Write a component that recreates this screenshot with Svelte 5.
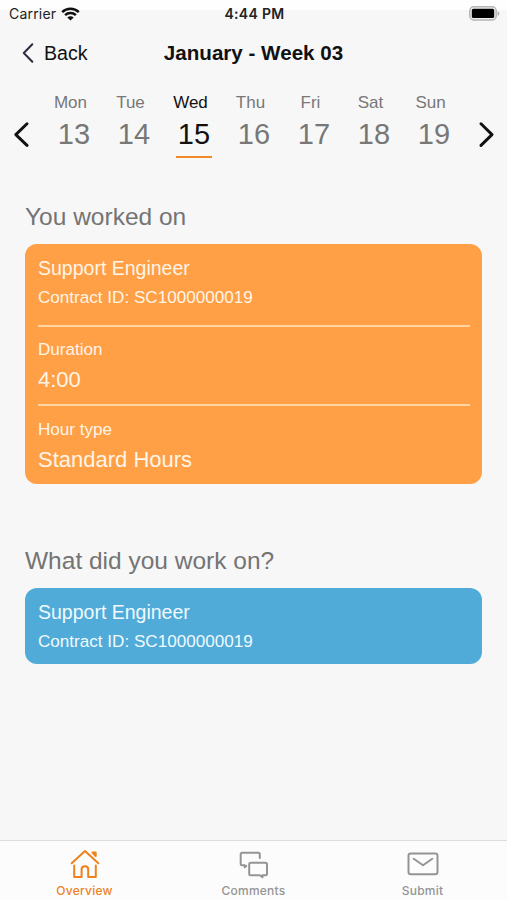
<script lang="ts">
    const days = [
        { name: "Mon", date: 13 },
        { name: "Tue", date: 14 },
        { name: "Wed", date: 15 },
        { name: "Thu", date: 16 },
        { name: "Fri", date: 17 },
        { name: "Sat", date: 18 },
        { name: "Sun", date: 19 }
    ];

    const tabs = ["Overview", "Comments", "Submit"];

    let selected = $state(15);
    let activeTab = $state("Overview");
</script>

<div class="screen">
    <div class="status-bar">
        <div class="carrier">
            <span>Carrier</span>
            <svg width="19" height="14" viewBox="0 0 19 14">
                <g fill="none" stroke="#111" stroke-width="2.5">
                    <path d="M1.2 5.1C5.8 0.7 13.2 0.7 17.8 5.1" />
                    <path d="M4.1 8.1C7 5.3 12 5.3 14.9 8.1" />
                </g>
                <path d="M6.3 10.4C8.1 8.8 10.9 8.8 12.7 10.4L9.5 13.6Z" fill="#111" />
            </svg>
        </div>
        <span class="time">4:44 PM</span>
        <svg class="battery" width="31" height="15" viewBox="0 0 31 15">
            <rect x="0.8" y="0.8" width="26.4" height="13.2" rx="4" fill="#f1f1f1" stroke="#b5b5b5" stroke-width="1.5" />
            <rect x="2.8" y="2.8" width="22.4" height="9.2" rx="1.6" fill="#000" />
            <path d="M28.7 5.2C30.9 6 30.9 9 28.7 9.8Z" fill="#aaa" />
        </svg>
    </div>

    <header>
        <button class="back">
            <svg width="12" height="20" viewBox="0 0 12 20">
                <path d="M10.3 1.2L1.8 10L10.3 18.8" fill="none" stroke="#2c2e40" stroke-width="2" stroke-linecap="round" stroke-linejoin="round" />
            </svg>
            <span>Back</span>
        </button>
        <h1>January - Week 03</h1>
    </header>

    <div class="week">
        <button class="arrow" aria-label="Previous week">
            <svg width="16" height="26" viewBox="0 0 16 26">
                <path d="M14 1.8L2.8 12.6L14 23.4" fill="none" stroke="#111" stroke-width="2.9" stroke-linecap="round" stroke-linejoin="round" />
            </svg>
        </button>
        {#each days as day}
            <button class="day" class:selected={day.date === selected} onclick={() => selected = day.date}>
                <span class="name">{day.name}</span>
                <span class="date">{day.date}</span>
            </button>
        {/each}
        <button class="arrow next" aria-label="Next week">
            <svg width="16" height="26" viewBox="0 0 16 26">
                <path d="M2 1.8L13 12.6L2 23.4" fill="none" stroke="#111" stroke-width="2.9" stroke-linecap="round" stroke-linejoin="round" />
            </svg>
        </button>
    </div>

    <main>
        <h2>You worked on</h2>
        <div class="card worked">
            <div class="contract">
                <p class="title">Support Engineer</p>
                <p class="label">Contract ID: SC1000000019</p>
            </div>
            <div class="detail">
                <p class="label">Duration</p>
                <p class="value">4:00</p>
            </div>
            <div class="detail">
                <p class="label">Hour type</p>
                <p class="value">Standard Hours</p>
            </div>
        </div>

        <h2 class="question">What did you work on?</h2>
        <div class="card available">
            <div class="contract">
                <p class="title">Support Engineer</p>
                <p class="label">Contract ID: SC1000000019</p>
            </div>
        </div>
    </main>

    <nav>
        {#each tabs as tab}
            <button class="tab" class:active={tab === activeTab} onclick={() => activeTab = tab}>
                <svg width="32" height="32" viewBox="0 0 32 32" fill="none" stroke="currentColor" stroke-width="2" stroke-linecap="round" stroke-linejoin="round">
                    {#if tab === "Overview"}
                        <path d="M2.7 15.3L16 3L29.3 15.3" />
                        <path d="M5.2 17.5V29H12.6V21.4C12.6 17.3 19.2 17.3 19.2 21.4V29H26.8V17.5" />
                        <path d="M23.5 4.6H26.7V8Z" fill="currentColor" />
                    {:else if tab === "Comments"}
                        <path d="M21.8 10V6.2Q21.8 4.7 20.3 4.7H4.2Q2.7 4.7 2.7 6.2V15.7Q2.7 17.2 4.2 17.2H6.7V19.3L8.2 17.9" />
                        <path d="M12.7 14.7H27.5Q29 14.7 29 16.2V25.7Q29 27.2 27.5 27.2H24.5V29.2L21.8 27.2H12.7Q11.2 27.2 11.2 25.7V16.2Q11.2 14.7 12.7 14.7Z" />
                    {:else}
                        <rect x="1.5" y="5.5" width="29" height="20.7" rx="2.3" />
                        <path d="M6.7 10.8L16 17.2L25.3 10.8" />
                    {/if}
                </svg>
                <span>{tab}</span>
            </button>
        {/each}
    </nav>
</div>

<style>
    :global(body) {
        margin: 0;
    }

    .screen {
        display: flex;
        flex-direction: column;
        height: 900px;
        background: linear-gradient(#fefefe 10px, #f7f7f7 10px);
        font-family: "Liberation Sans", Arial, sans-serif;
        color: #111;
    }

    button {
        border: none;
        background: none;
        padding: 0;
        font: inherit;
        color: inherit;
        cursor: pointer;
    }

    h1, h2, p {
        margin: 0;
        font-weight: normal;
    }

    .status-bar {
        display: grid;
        grid-template-columns: 1fr auto 1fr;
        align-items: center;
        height: 27px;
        padding: 0 7px 0 9px;
        font-family: Inter, sans-serif;
        font-size: 14px;
        letter-spacing: 0.2px;
        color: #222;
    }

    .carrier {
        display: flex;
        align-items: center;
        gap: 5px;
    }

    .time {
        font-weight: 600;
        letter-spacing: 0.3px;
    }

    .battery {
        justify-self: end;
    }

    header {
        display: grid;
        grid-template-columns: 1fr auto 1fr;
        align-items: center;
        height: 52px;
        padding: 0 22px;
    }

    .back {
        display: flex;
        align-items: center;
        gap: 10px;
        font-size: 19.6px;
    }

    h1 {
        font-size: 20.6px;
        font-weight: bold;
    }

    .week {
        display: flex;
        height: 80px;
        padding: 14px 12px 0 13px;
    }

    .arrow {
        display: flex;
        width: 31px;
        padding-top: 29px;
    }

    .arrow.next {
        justify-content: flex-end;
        width: 31px;
    }

    .day {
        display: flex;
        flex-direction: column;
        align-items: center;
        width: 60px;
        height: 66px;
        color: #777;
    }

    .name {
        margin-right: 7px;
        font-size: 17px;
        line-height: 20px;
    }

    .date {
        width: 36px;
        height: 43px;
        border-bottom: 2px solid transparent;
        font-size: 29px;
        line-height: 42px;
    }

    .selected {
        color: #111;
    }

    .selected .date {
        border-color: #f08a24;
    }

    main {
        flex: 1;
        padding: 29px 25px 0;
    }

    h2 {
        height: 42px;
        font-size: 24.5px;
        line-height: 30px;
        color: #747474;
    }

    .question {
        margin-top: 62px;
    }

    .card {
        box-sizing: border-box;
        padding: 0 12px 0 13px;
        border-radius: 12px;
        color: #fff5e6;
    }

    .worked {
        height: 240px;
        background: #ff9f46;
    }

    .available {
        height: 76px;
        background: #51abd8;
        color: #f0faff;
    }

    .contract {
        height: 81px;
        padding-top: 12px;
        box-sizing: border-box;
    }

    .title {
        font-size: 19.5px;
        line-height: 24px;
    }

    .contract .label {
        margin-top: 8px;
    }

    .label {
        font-size: 17.1px;
        line-height: 20px;
    }

    .detail {
        height: 79px;
        box-sizing: border-box;
        padding-top: 13px;
        border-top: 2px solid #ffd5a0;
    }

    .detail + .detail {
        padding-top: 14px;
    }

    .value {
        margin-top: 6px;
        font-size: 22px;
        line-height: 28px;
    }

    nav {
        display: flex;
        height: 59px;
        border-top: 1px solid #dedede;
        background: #fcfcfc;
    }

    .tab {
        display: flex;
        flex: 1;
        flex-direction: column;
        align-items: center;
        padding-top: 7px;
        color: #949494;
        font-family: Inter, sans-serif;
        font-size: 12px;
        font-weight: 500;
        letter-spacing: 0.25px;
        line-height: 16px;
    }

    .tab span {
        margin-top: 3px;
    }

    .tab.active {
        color: #ee821e;
    }
</style>
